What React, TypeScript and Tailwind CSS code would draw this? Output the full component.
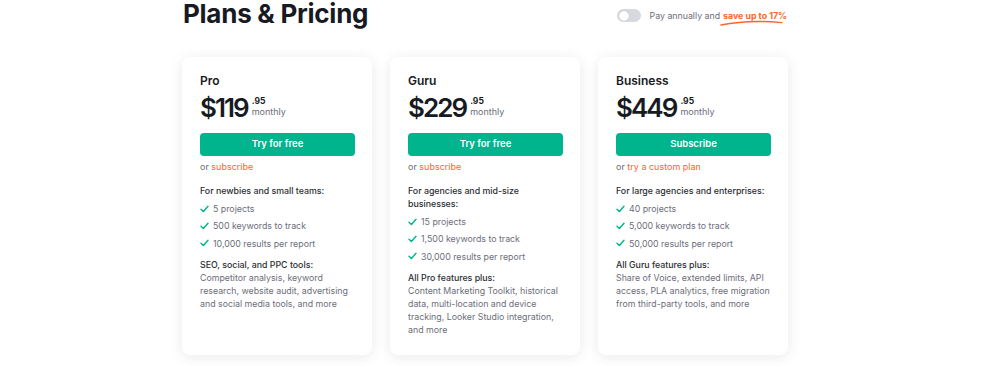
const PLANS = [
  {
    name: "Pro",
    price: "$119",
    cta: "Try for free",
    alt: "subscribe",
    audience: "For newbies and small teams:",
    items: ["5 projects", "500 keywords to track", "10,000 results per report"],
    toolsTitle: "SEO, social, and PPC tools:",
    tools: "Competitor analysis, keyword research, website audit, advertising and social media tools, and more",
  },
  {
    name: "Guru",
    price: "$229",
    cta: "Try for free",
    alt: "subscribe",
    audience: "For agencies and mid-size businesses:",
    items: ["15 projects", "1,500 keywords to track", "30,000 results per report"],
    toolsTitle: "All Pro features plus:",
    tools: "Content Marketing Toolkit, historical data, multi-location and device tracking, Looker Studio integration, and more",
  },
  {
    name: "Business",
    price: "$449",
    cta: "Subscribe",
    alt: "try a custom plan",
    audience: "For large agencies and enterprises:",
    items: ["40 projects", "5,000 keywords to track", "50,000 results per report"],
    toolsTitle: "All Guru features plus:",
    tools: "Share of Voice, extended limits, API access, PLA analytics, free migration from third-party tools, and more",
  },
];

function Check() {
  return (
    <svg width="9" height="8" viewBox="0 0 9 8" fill="none" className="shrink-0">
      <path d="M1 4.2L3.4 6.5L8 1.3" stroke="#00b48e" strokeWidth="1.4" strokeLinecap="round" strokeLinejoin="round" />
    </svg>
  );
}

export default function App() {
  return (
    <div className="w-[1000px] h-[366px] bg-white overflow-hidden font-['Inter',sans-serif] text-[#171a22]">
      <div className="ml-[182px] w-[606px]">
        {/* Header */}
        <div className="flex items-start justify-between">
          <h1 className="text-[26px] leading-[28px] font-bold tracking-[-0.01em] pl-px">Plans &amp; Pricing</h1>
          <div className="flex items-center mt-[9px] mr-px">
            <span className="w-6 h-[13px] rounded-full bg-[#d7d9df] flex items-center px-[2px]">
              <span className="w-[10px] h-[10px] rounded-full bg-white shadow-[0_0_1px_rgba(0,0,0,0.3)]" />
            </span>
            <span className="ml-[9px] text-[8.8px] text-[#6c6e79]">Pay annually and</span>
            <span className="relative ml-[3px] text-[8.8px] font-bold text-[#ff642d]">
              save up to 17%
              <svg className="absolute left-[-3px] top-[11px]" width="64" height="6" viewBox="0 0 64 6" fill="none">
                <path d="M1 5C18 1.5 42 0.8 62 2.6" stroke="#ff642d" strokeWidth="1.4" strokeLinecap="round" />
              </svg>
            </span>
          </div>
        </div>

        {/* Cards */}
        <div className="mt-[29px] grid grid-cols-3 gap-[18px]">
          {PLANS.map((p) => (
            <div
              key={p.name}
              className="h-[298px] rounded-lg bg-white shadow-[0_2px_14px_rgba(20,24,40,0.09)] pl-[18px] pr-[17px] pt-4"
            >
              <div className="text-[12px] leading-4 font-semibold">{p.name}</div>
              <div className="mt-[5px] flex items-start">
                <span className="text-[26px] leading-[27px] font-semibold tracking-[-0.075em]">{p.price}</span>
                <span className="ml-[4px] flex flex-col">
                  <span className="text-[8.5px] leading-[10px] font-bold mt-[2px]">.95</span>
                  <span className="text-[9px] leading-[11px] text-[#6c6e79]">monthly</span>
                </span>
              </div>
              <button className="mt-3 w-full h-[23px] rounded-[4px] bg-[#00b48e] text-white text-[9.5px] font-semibold">
                {p.cta}
              </button>
              <div className="mt-1 text-[9px] leading-[14px] text-[#6c6e79]">
                or <span className="text-[#ff642d]">{p.alt}</span>
              </div>
              <div className="mt-[10px] text-[8.8px] leading-[13px] font-medium text-[#2b2e33]">{p.audience}</div>
              <ul className="mt-[3px]">
                {p.items.map((it) => (
                  <li key={it} className="flex items-center gap-[4px] h-[17.3px] text-[8.8px] text-[#6c6e79]">
                    <Check />
                    {it}
                  </li>
                ))}
              </ul>
              <div className="mt-[6px] text-[8.8px] leading-[13px] font-medium text-[#2b2e33]">{p.toolsTitle}</div>
              <p className="text-[8.8px] leading-[13px] text-[#6c6e79]">{p.tools}</p>
            </div>
          ))}
        </div>
      </div>
    </div>
  );
}
